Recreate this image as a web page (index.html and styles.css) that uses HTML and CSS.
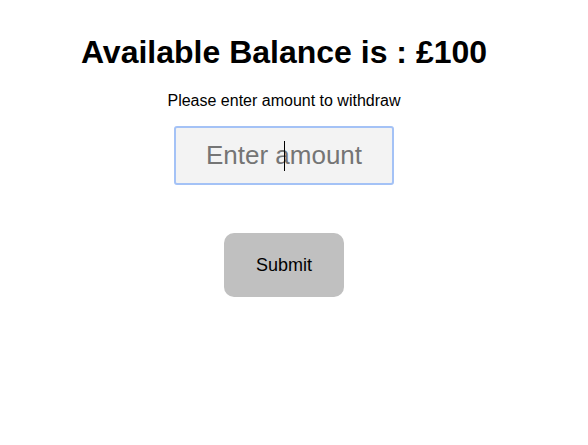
FILE: index.html
```html
<!DOCTYPE html>
<html>
<head>
<meta charset="utf-8">
<link rel="stylesheet" href="styles.css">
</head>
<body>
<main class="page">
  <h1 class="title">Available Balance is : £100</h1>
  <p class="label">Please enter amount to withdraw</p>
  <div class="field">
    <input class="amount" type="text" placeholder="Enter amount" autofocus>
    <span class="caret"></span>
  </div>
  <button class="submit" type="button">Submit</button>
</main>
</body>
</html>
```

FILE: styles.css
```css
html, body {
  margin: 0;
  padding: 0;
  background: #ffffff;
}
body {
  font-family: "Liberation Sans", Arial, sans-serif;
  color: #000;
}
.page {
  width: 568px;
  display: flex;
  flex-direction: column;
  align-items: center;
  padding-top: 34px;
}
.title {
  margin: 0;
  font-size: 32px;
  font-weight: bold;
  line-height: 37px;
}
.label {
  margin: 21px 0 0;
  font-size: 16px;
  line-height: 18px;
}
.field {
  position: relative;
  margin-top: 16px;
}
.amount {
  box-sizing: border-box;
  width: 220px;
  height: 59px;
  border: 2px solid #a4c2f6;
  border-radius: 3px;
  background: #f3f3f3;
  font-family: "Liberation Sans", Arial, sans-serif;
  font-size: 26px;
  text-align: center;
  outline: none;
  caret-color: transparent;
  padding: 0 6px;
  display: block;
}
.amount::placeholder {
  color: #757575;
}
.caret {
  position: absolute;
  left: 110px;
  top: 15px;
  width: 1px;
  height: 30px;
  background: #000;
}
.submit {
  margin-top: 48px;
  width: 120px;
  height: 64px;
  border: none;
  border-radius: 10px;
  background: #c0c0c0;
  font-family: "Liberation Sans", Arial, sans-serif;
  font-size: 18px;
  color: #000;
  padding: 0;
}
```
